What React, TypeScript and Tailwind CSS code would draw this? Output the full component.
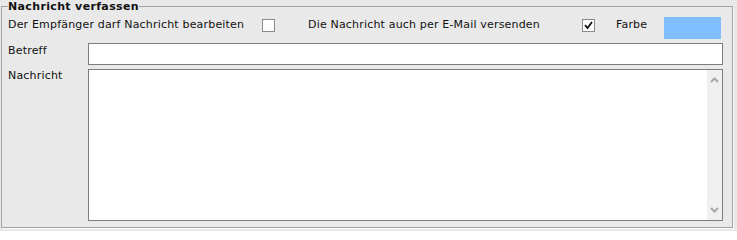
import React from "react";

function Box({ checked }: { checked?: boolean }) {
  return (
    <div className="mt-[2px] w-[13px] h-[13px] shrink-0 border border-[#8a8a8a] bg-white flex items-center justify-center">
      {checked && (
        <svg width="9" height="9" viewBox="0 0 9 9">
          <path d="M1 4 L3.5 7 L8 1" fill="none" stroke="#111" strokeWidth="1.8" />
        </svg>
      )}
    </div>
  );
}

export default function App() {
  return (
    <div className="w-[737px] h-[231px] bg-[#e9e9e9] pl-[1px] pt-0 font-['DejaVu_Sans',Verdana,sans-serif] text-[11px] leading-[13px] tracking-[0.18px] text-[#111]">
      <fieldset className="w-[732px] h-[228px] border border-[#a3a3a3] shadow-[1px_1px_0_#fafafa] px-[6px] pb-[5px] m-0">
        <legend className="px-0 font-bold text-[11px] leading-[13px] tracking-[0.35px]">Nachricht verfassen</legend>

        <div className="mt-[4px] flex items-start h-[22px]">
          <span className="mt-[1px] w-[254px] whitespace-nowrap">Der Empfänger darf Nachricht bearbeiten</span>
          <Box />
          <span className="mt-[1px] ml-[33px] w-[274px] whitespace-nowrap">Die Nachricht auch per E-Mail versenden</span>
          <Box checked />
          <span className="mt-[1px] ml-[21px] w-[48px]">Farbe</span>
          <div className="w-[57px] h-[22px] bg-[#80bfff]" />
        </div>

        <div className="mt-[4px] flex items-start">
          <span className="mt-[1px] w-[80px]">Betreff</span>
          <div className="w-[635px] h-[22px] border border-[#7d7d7d] bg-white" />
        </div>

        <div className="mt-[4px] flex items-start">
          <span className="w-[80px]">Nachricht</span>
          <div className="w-[635px] h-[152px] border border-[#7d7d7d] bg-white flex justify-end">
            <div className="w-[15px] h-full bg-[#f0f0f0] flex flex-col items-center justify-between py-[7px]">
              <svg width="9" height="6" viewBox="0 0 9 6">
                <path d="M1 5 L4.5 1.5 L8 5" fill="none" stroke="#a8a8a8" strokeWidth="2" />
              </svg>
              <svg width="9" height="6" viewBox="0 0 9 6">
                <path d="M1 1 L4.5 4.5 L8 1" fill="none" stroke="#a8a8a8" strokeWidth="2" />
              </svg>
            </div>
          </div>
        </div>
      </fieldset>
    </div>
  );
}
